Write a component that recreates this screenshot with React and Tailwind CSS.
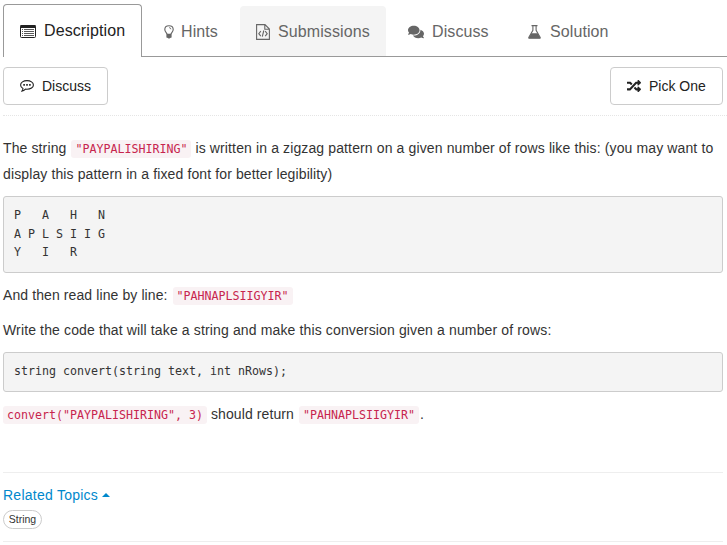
import React from "react";
import { FaComments, FaRandom } from "react-icons/fa";

function ListIcon() {
  return (
    <svg className="h-[13px] w-4 shrink-0" viewBox="0 0 16 13" fill="none" stroke="currentColor">
      <rect x="0.5" y="0.5" width="15" height="12" rx="1" />
      <path d="M.5 1.5h15" strokeWidth="3" />
      <path d="M2 4.5h1M2 6.5h1M2 8.5h1M2 10.5h1M4 4.5h10M4 6.5h10M4 8.5h10M4 10.5h10" strokeWidth=".75" />
    </svg>
  );
}

function BulbIcon() {
  return (
    <svg className="h-[14px] w-[10px] shrink-0" viewBox="0 0 10 14" fill="none" stroke="currentColor" strokeWidth="1.15">
      <path d="M3 9.3C3 7.4.8 7 .8 4.5.8 2.2 2.6.7 5 .7s4.2 1.5 4.2 3.8C9.2 7 7 7.4 7 9.3" />
      <path d="M5 2.6q1.8 0 1.9 1.7" strokeWidth=".8" />
      <path d="M2.4 8.8h5.2v3.6l-1.5.5q-1.1 1.4-2.2 0l-1.5-.5z" fill="currentColor" stroke="none" />
    </svg>
  );
}

function FileCodeIcon() {
  return (
    <svg className="h-4 w-[14px] shrink-0" viewBox="0 0 14 16" fill="none" stroke="currentColor" strokeWidth="1.1">
      <path d="M.6.6h8.4l4.4 4.4v10.4H.6zM8.8.8v4.4h4.4" />
      <path d="M4.8 7.2 2.8 9.7l2 2.5M9.2 7.2l2 2.5-2 2.5M7.8 6.5l-1.5 6.2" />
    </svg>
  );
}

function FlaskIcon() {
  return (
    <svg className="h-[14px] w-[13px] shrink-0" viewBox="0 0 13 14" fill="none" stroke="currentColor">
      <path d="M3.5.6h6M4.9.6v4.7L.9 12.2q-.5 1.1.7 1.1h9.8q1.2 0 .7-1.1l-4-6.9V.6" strokeWidth="1.1" />
      <path d="M3.4 8.3h6.2l2.9 5H.5z" fill="currentColor" stroke="none" />
    </svg>
  );
}

function SpeechIcon() {
  return (
    <svg className="h-[12px] w-[14px] shrink-0" viewBox="0 0 14 12" fill="none" stroke="currentColor" strokeWidth="1.1" strokeLinejoin="round">
      <path d="M7 .6c3.6 0 6.4 1.9 6.4 4.3S10.600 9.200 7 9.200q-.8 0-1.500-.1Q3.900 10.900 1.600 11.300q1.200-1 1.400-2.800C1.500 7.700.6 6.400.6 4.900.6 2.500 3.400.6 7 .6z" />
      <path d="M3.300 4.900h1.600M6.200 4.900h1.600M9.100 4.900h1.600" strokeWidth="1.6" />
    </svg>
  );
}

function Code({ children }) {
  return (
    <code className="ml-px rounded-[3px] bg-[#f9f2f4] px-1 py-0.5 font-['DejaVu_Sans_Mono',monospace] text-[11.63px] leading-none tracking-normal text-[#c7254e] first:ml-0">
      {children}
    </code>
  );
}

function Block({ className, children }) {
  return (
    <pre className={`rounded-[3px] border border-[#ccc] bg-[#f4f4f4] px-2.5 font-['DejaVu_Sans_Mono',monospace] text-[11.63px] leading-[18.57px] tracking-normal text-[#333] ${className}`}>
      {children}
    </pre>
  );
}

export default function App() {
  return (
    <main className="h-[545px] overflow-hidden bg-white pl-[3px] pr-1 font-['Liberation_Sans',Arial,sans-serif] text-[14px] text-[#333]">
      <nav className="-mr-1 flex h-[57px] items-end border-b border-[#999] pt-1 text-[16px] tracking-[0.1px] text-[#666]">
        <div className="-mb-px flex h-[53px] w-[139px] items-center rounded-t border border-b-0 border-[#999] bg-white pl-4 text-[#222]">
          <ListIcon />
          <span className="ml-2 whitespace-nowrap">Description</span>
        </div>
        <div className="flex h-[50px] w-[98px] items-center pl-[22px] pt-0.5">
          <BulbIcon />
          <span className="ml-[7px]">Hints</span>
        </div>
        <div className="flex h-[50px] w-[146px] items-center rounded-t bg-[#f4f4f4] pl-4 pt-0.5">
          <FileCodeIcon />
          <span className="ml-2">Submissions</span>
        </div>
        <div className="flex h-[50px] w-[119px] items-center pl-[22px] pt-0.5">
          <FaComments className="size-4" />
          <span className="ml-2">Discuss</span>
        </div>
        <div className="flex h-[50px] items-center pl-[23px] pt-0.5">
          <FlaskIcon />
          <span className="ml-[9px]">Solution</span>
        </div>
      </nav>

      <div className="-mr-1 flex h-[59px] items-start justify-between border-b border-dotted border-[#e5e5e5] pr-[4px] pt-[10px] text-[#222]">
        <button className="flex h-[38px] w-[105px] items-center rounded border border-[#ccc] pl-4">
          <SpeechIcon />
          <span className="ml-2">Discuss</span>
        </button>
        <button className="flex h-[38px] w-[113px] items-center rounded border border-[#ccc] pl-4">
          <FaRandom className="size-[14px]" />
          <span className="ml-2 whitespace-nowrap">Pick One</span>
        </button>
      </div>

      <section className="whitespace-nowrap">
        <p className="mt-[19px] leading-[26px]">
          <span className="tracking-[0.12px]">The string </span><Code>"PAYPALISHIRING"</Code><span className="tracking-[0.125px]"> is written in a zigzag pattern on a given number of rows like this: (you may want to</span>
          <br />
          <span className="tracking-[0.12px]">display this pattern in a fixed font for better legibility)</span>
        </p>
        <Block className="mt-[9px] h-[77px] pt-[9px]">{"P   A   H   N\nA P L S I I G\nY   I   R"}</Block>
        <p className="mt-[9px] leading-[26px]">
          <span className="tracking-[0.1px]">And then read line by line: </span><Code>"PAHNAPLSIIGYIR"</Code>
        </p>
        <p className="mt-[9px] leading-[26px]"><span className="tracking-[0.135px]">Write the code that will take a string and make this conversion given a number of rows:</span></p>
        <Block className="mt-[9px] h-10 pt-[9px]">string convert(string text, int nRows);</Block>
        <p className="mt-[9px] leading-[26px]">
          <Code>convert("PAYPALISHIRING", 3)</Code><span className="tracking-[0.1px]"> should return </span><Code>"PAHNAPLSIIGYIR"</Code><span className="ml-px">.</span>
        </p>
      </section>

      <section className="mt-[45px] h-[70px] border-y border-[#eee] pt-3">
        <a className="flex h-5 items-center text-[#0088cc]">
          <span className="tracking-[0.25px]">Related Topics</span>
          <svg className="ml-1 h-1 w-2" viewBox="0 0 8 4" fill="currentColor"><path d="M0 4 4 0l4 4z" /></svg>
        </a>
        <span className="mt-[5px] flex h-[19px] w-[39px] items-center justify-center rounded-full border border-[#ccc] text-[10.5px]">String</span>
      </section>
    </main>
  );
}
